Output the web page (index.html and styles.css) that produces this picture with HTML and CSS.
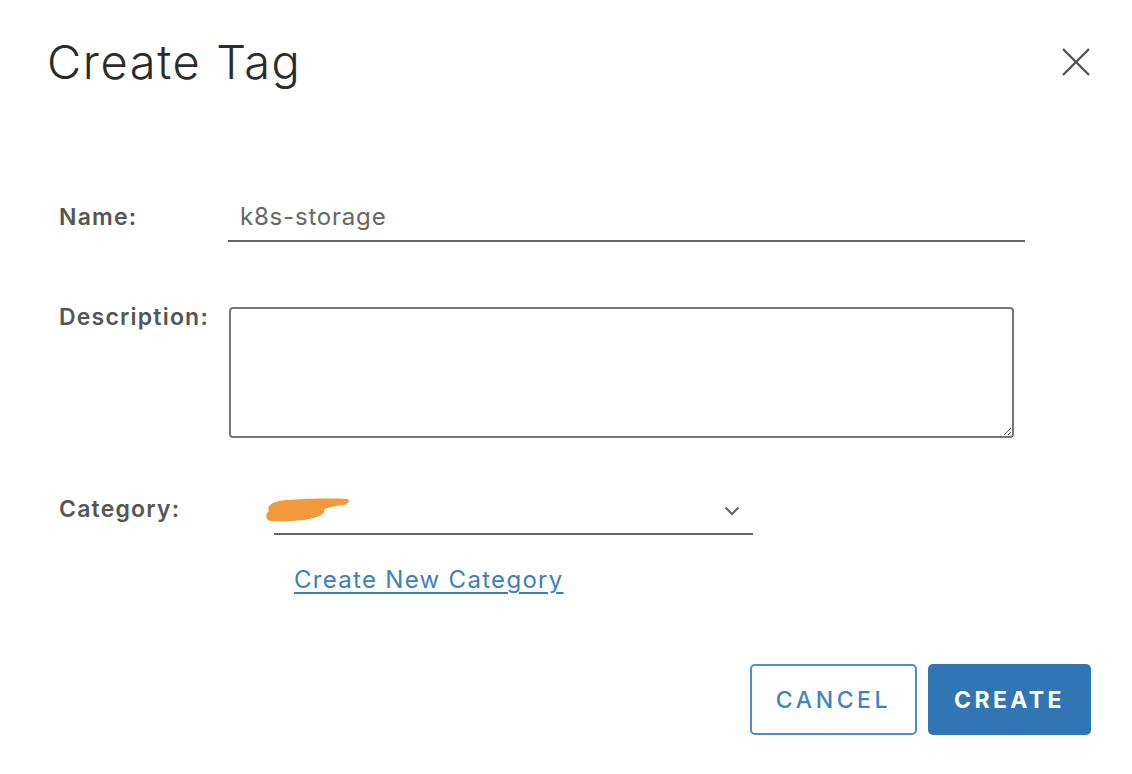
FILE: index.html
```html
<!DOCTYPE html>
<html lang="en">
<head>
<meta charset="utf-8">
<title>Create Tag</title>
<link rel="stylesheet" href="styles.css">
</head>
<body>
<div class="dialog">
  <header class="header">
    <h1 class="title">Create Tag</h1>
    <button class="close" aria-label="Close">
      <svg width="28" height="28" viewBox="0 0 28 28"><path d="M1 1 L27 27 M27 1 L1 27" stroke="#555" stroke-width="2.4" fill="none"/></svg>
    </button>
  </header>
  <form class="form">
    <div class="row row-name">
      <label class="label">Name:</label>
      <input class="input" type="text" value="k8s-storage">
    </div>
    <div class="row row-desc">
      <label class="label">Description:</label>
      <textarea class="textarea"></textarea>
    </div>
    <div class="row row-cat">
      <label class="label">Category:</label>
      <div class="select">
        <svg class="redact" width="86" height="26" viewBox="0 0 86 26"><path d="M14 4 C30 2 60 1 82 2 C86 3 84 7 78 8 C70 9 64 10 60 12 C58 14 62 16 52 20 C40 24 20 25 6 24 C0 23 0 17 4 14 C2 11 4 6 14 4 Z" fill="#f2993b"/></svg>
        <svg class="chev" width="16" height="10" viewBox="0 0 16 10"><path d="M1.5 1.5 L8 8 L14.5 1.5" stroke="#666" stroke-width="2" fill="none"/></svg>
      </div>
    </div>
    <div class="row row-link">
      <a class="link" href="#">Create New Category</a>
    </div>
  </form>
  <footer class="footer">
    <button class="btn btn-outline">CANCEL</button>
    <button class="btn btn-primary">CREATE</button>
  </footer>
</div>
</body>
</html>
```
FILE: styles.css
```css
* { box-sizing: border-box; }
html, body { margin: 0; padding: 0; background: #fff; }
body { font-family: Inter, "Open Sans", sans-serif; color: #333; }
.dialog { width: 1132px; height: 774px; padding: 32px 41px 0 47px; }
.header { display: flex; align-items: center; justify-content: space-between; height: 60px; }
.title { margin: 0; font-size: 47px; font-weight: 300; color: #2b2b2b; letter-spacing: 1.6px; line-height: 60px; }
.close { border: 0; background: none; padding: 0; margin-right: 1px; width: 28px; height: 28px; display: flex; }
.form { padding-left: 12px; }
.row { display: flex; }
.label { width: 169px; flex: none; font-size: 23px; font-weight: 600; color: #565656; letter-spacing: 1.2px; line-height: 22px; }
.row-name { margin-top: 106px; align-items: flex-start; }
.row-name .label { padding-top: 8px; }
.input { width: 797px; height: 44px; border: 0; border-bottom: 2px solid #666; padding: 0 12px 6px; font-family: inherit; font-size: 24px; color: #666; letter-spacing: 0.8px; outline: none; background: none; }
.row-desc { margin-top: 65px; align-items: flex-start; }
.row-desc .label { margin-top: -1px; }
.textarea { margin-left: 1px; width: 785px; height: 131px; border: 2px solid #777; border-radius: 4px; font-family: inherit; font-size: 20px; outline: none; }
.row-cat { margin-top: 56px; align-items: flex-start; }
.row-cat .label { padding-top: 4px; }
.select { position: relative; margin-left: 46px; width: 479px; height: 41px; border-bottom: 2px solid #666; }
.redact { position: absolute; left: -9px; top: 3px; }
.chev { position: absolute; right: 13px; top: 12px; }
.row-link { margin-top: 30px; padding-left: 235px; }
.link { font-size: 24px; color: #3a7fc3; text-decoration: underline; text-underline-offset: 4px; letter-spacing: 1.3px; }
.footer { display: flex; justify-content: flex-end; gap: 11px; margin-top: 70px; }
.btn { height: 71px; border-radius: 5px; font-family: inherit; font-size: 23px; padding: 0; }
.btn-outline { width: 167px; background: #fff; border: 2px solid #4a8fca; color: #3f84c2; font-weight: 500; letter-spacing: 3.6px; }
.btn-primary { width: 163px; background: #3176b3; border: 2px solid #3176b3; color: #fff; font-weight: 700; letter-spacing: 3.4px; }
```
